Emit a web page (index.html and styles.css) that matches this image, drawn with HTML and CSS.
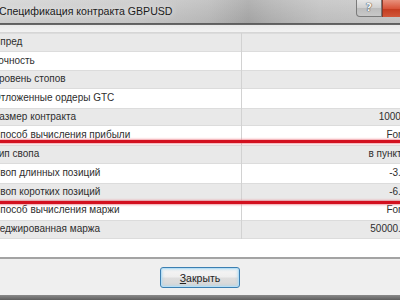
FILE: index.html
```html
<!DOCTYPE html>
<html lang="ru">
<head>
<meta charset="utf-8">
<link rel="stylesheet" href="styles.css">
</head>
<body>
<div class="window">
  <div class="titlebar">
    <span class="title">Спецификация контракта GBPUSD</span>
    <div class="ctrls">
      <div class="help">?</div>
      <div class="close"></div>
    </div>
  </div>
  <div class="frame"></div>
  <div class="list">
    <div class="row alt"><div class="k">Спред</div><div class="v"></div></div>
    <div class="row"><div class="k">Точность</div><div class="v"></div></div>
    <div class="row alt"><div class="k">Уровень стопов</div><div class="v"></div></div>
    <div class="row"><div class="k">Отложенные ордеры GTC</div><div class="v"></div></div>
    <div class="row alt"><div class="k">Размер контракта</div><div class="v">100000</div></div>
    <div class="row"><div class="k">Способ вычисления прибыли</div><div class="v">Forex</div></div>
    <div class="row alt"><div class="k">Тип свопа</div><div class="v">в пунктах</div></div>
    <div class="row"><div class="k">Своп длинных позиций</div><div class="v">-3.30</div></div>
    <div class="row alt"><div class="k">Своп коротких позиций</div><div class="v">-6.50</div></div>
    <div class="row"><div class="k">Способ вычисления маржи</div><div class="v">Forex</div></div>
    <div class="row alt"><div class="k">Хеджированная маржа</div><div class="v">50000.00</div></div>
  </div>
  <div class="footer">
    <button class="btn"><u>З</u>акрыть</button>
  </div>
  <div class="bottom-frame"></div>
  <div class="mark mark1"></div>
  <div class="mark mark2"></div>
</div>
</body>
</html>
```
FILE: styles.css
```css
html, body {
  margin: 0;
  padding: 0;
  width: 400px;
  height: 300px;
  overflow: hidden;
  background: #f0f0f0;
}
.window {
  position: relative;
  width: 400px;
  height: 300px;
  overflow: hidden;
  font-family: "Liberation Sans", Arial, sans-serif;
  display: flex;
  flex-direction: column;
}
.titlebar {
  height: 23px;
  flex: none;
  display: flex;
  align-items: flex-start;
  justify-content: space-between;
  background:
    linear-gradient(180deg, rgba(255,255,255,0.12), rgba(0,0,0,0.04)),
    linear-gradient(90deg, #d4d4d4 0%, #cbcbcb 35%, #bdbdbd 52%, #a9a9a9 62%, #b4b4b4 68%, #c4c4c4 80%, #c9c9c9 100%);
}
.title {
  font-size: 10.6px;
  color: #1a1a1a;
  margin-left: -1px;
  margin-top: 5px;
  white-space: nowrap;
  text-shadow: 0 0 6px rgba(255,255,255,0.9);
}
.ctrls {
  display: flex;
  height: 17px;
}
.help {
  width: 24px;
  height: 16px;
  border: 1px solid #7a7a7a;
  border-top: none;
  border-radius: 0 0 0 4px;
  background: linear-gradient(180deg, #e6e6e6 0%, #cfcfcf 50%, #bcbcbc 51%, #c8c8c8 100%);
  color: #f6f6f6;
  font-family: "DejaVu Sans", sans-serif;
  font-weight: bold;
  font-size: 11px;
  line-height: 16px;
  text-align: center;
  text-shadow: 0 0 1px #333, 0 0 1px #333;
}
.close {
  width: 17px;
  height: 17px;
  background: linear-gradient(180deg, #e8917c 0%, #d8553a 50%, #c43a1e 51%, #d0573a 100%);
  border-left: 1px solid #8a3a2a;
}
.frame {
  flex: none;
  height: 10px;
  background: linear-gradient(180deg, #5a5a5a 0, #6a6a6a 2px, #e9e9e9 2px, #f3f3f3 9px, #d6d6d6 9px, #d6d6d6 10px);
}
.list {
  flex: none;
  height: 224px;
  background: #fff;
  border-bottom: 2px solid #a3a3a3;
}
.row {
  display: flex;
  width: 412px;
  height: 18.7px;
  font-size: 10px;
  color: #2e2e2e;
  line-height: 18.7px;
  background: #fff;
}
.row.alt {
  background: #e9e9e9;
  box-shadow: inset 0 1px 0 #dcdcdc, inset 0 -1px 0 #dcdcdc;
}
.k {
  width: 242px;
  flex: none;
  box-sizing: border-box;
  border-right: 1px solid #d2d2d2;
  text-indent: -7px;
  white-space: nowrap;
  overflow: hidden;
}
.v {
  flex: 1;
  text-align: right;
  white-space: nowrap;
}
.footer {
  flex: 1;
  display: flex;
  justify-content: center;
  align-items: flex-start;
  padding-top: 8px;
  background: #efefef;
}
.btn {
  width: 80px;
  height: 21px;
  margin: 0;
  border: 1px solid #3c7fb1;
  border-radius: 3px;
  background: linear-gradient(180deg, #f6f6f6 0%, #eeeeee 48%, #dedede 52%, #d6d6d6 100%);
  box-shadow: inset 0 0 0 1px #b6def5, inset 0 0 2px 2px rgba(170, 215, 240, 0.5);
  font-family: "Liberation Sans", Arial, sans-serif;
  font-size: 10.5px;
  color: #222;
  padding: 0;
}
.btn u {
  text-decoration: underline;
}
.bottom-frame {
  flex: none;
  height: 5px;
  background: linear-gradient(180deg, #8a8a8a, #5e5e5e);
}
.mark {
  position: absolute;
  left: 0;
  width: 400px;
  height: 3px;
  background: #d3101f;
  box-shadow: 0 0 2px 1px rgba(236, 120, 130, 0.7);
}
.mark1 { top: 140px; }
.mark2 { top: 201px; }
```
